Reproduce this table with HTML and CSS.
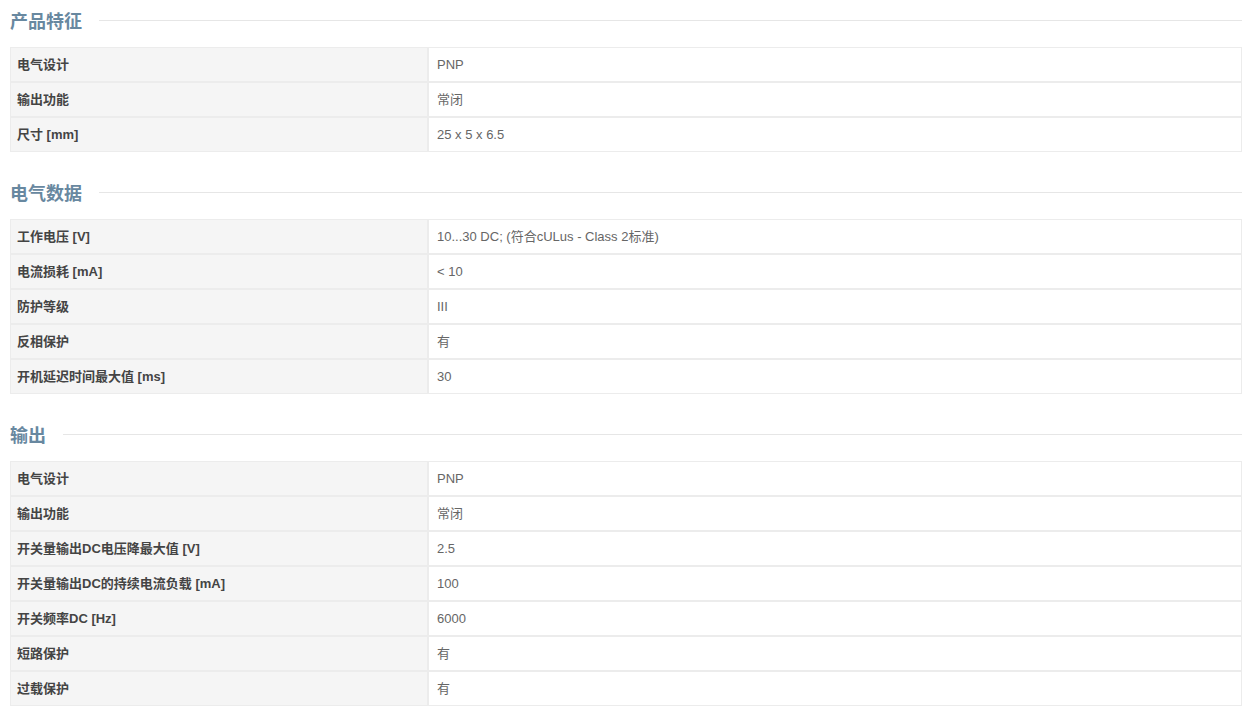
FILE: index.html
```html
<!DOCTYPE html>
<html lang="zh">
<head>
<meta charset="utf-8">
<link rel="stylesheet" href="styles.css">
</head>
<body>
<div class="page">
  <section class="sec">
    <h2 class="sec-title"><span>产品特征</span></h2>
    <div class="specs">
      <div class="k">电气设计</div><div class="v">PNP</div>
      <div class="k">输出功能</div><div class="v">常闭</div>
      <div class="k">尺寸 [mm]</div><div class="v">25 x 5 x 6.5</div>
    </div>
  </section>
  <section class="sec">
    <h2 class="sec-title"><span>电气数据</span></h2>
    <div class="specs">
      <div class="k">工作电压 [V]</div><div class="v">10...30 DC; (符合cULus - Class 2标准)</div>
      <div class="k">电流损耗 [mA]</div><div class="v">&lt; 10</div>
      <div class="k">防护等级</div><div class="v">III</div>
      <div class="k">反相保护</div><div class="v">有</div>
      <div class="k">开机延迟时间最大值 [ms]</div><div class="v">30</div>
    </div>
  </section>
  <section class="sec">
    <h2 class="sec-title"><span>输出</span></h2>
    <div class="specs">
      <div class="k">电气设计</div><div class="v">PNP</div>
      <div class="k">输出功能</div><div class="v">常闭</div>
      <div class="k">开关量输出DC电压降最大值 [V]</div><div class="v">2.5</div>
      <div class="k">开关量输出DC的持续电流负载 [mA]</div><div class="v">100</div>
      <div class="k">开关频率DC [Hz]</div><div class="v">6000</div>
      <div class="k">短路保护</div><div class="v">有</div>
      <div class="k">过载保护</div><div class="v">有</div>
    </div>
  </section>
</div>
</body>
</html>
```

FILE: styles.css
```css
html, body {
  margin: 0;
  padding: 0;
  background: #ffffff;
}
body {
  font-family: "Liberation Sans", Arial, "Noto Sans CJK SC", sans-serif;
  font-size: 13px;
}
.page {
  width: 1232px;
  padding: 0 10px;
}
.sec {
  margin-bottom: 20px;
}
.sec-title {
  display: flex;
  align-items: center;
  gap: 17px;
  height: 40px;
  margin: 0 0 7px 0;
  font-size: 18px;
  font-weight: bold;
  color: #6888a0;
}
.sec-title::after {
  content: "";
  flex: 1;
  height: 1px;
  background: #e6e6e6;
}
.specs {
  display: grid;
  grid-template-columns: 416px 1fr;
  gap: 2px;
  padding: 1px;
  background: #ececec;
}
.k, .v {
  height: 33px;
  display: flex;
  align-items: center;
  line-height: 1;
}
.k {
  background: #f5f5f5;
  font-weight: bold;
  color: #444444;
  padding-left: 6px;
}
.v {
  background: #ffffff;
  color: #666666;
  padding-left: 8px;
}
```
